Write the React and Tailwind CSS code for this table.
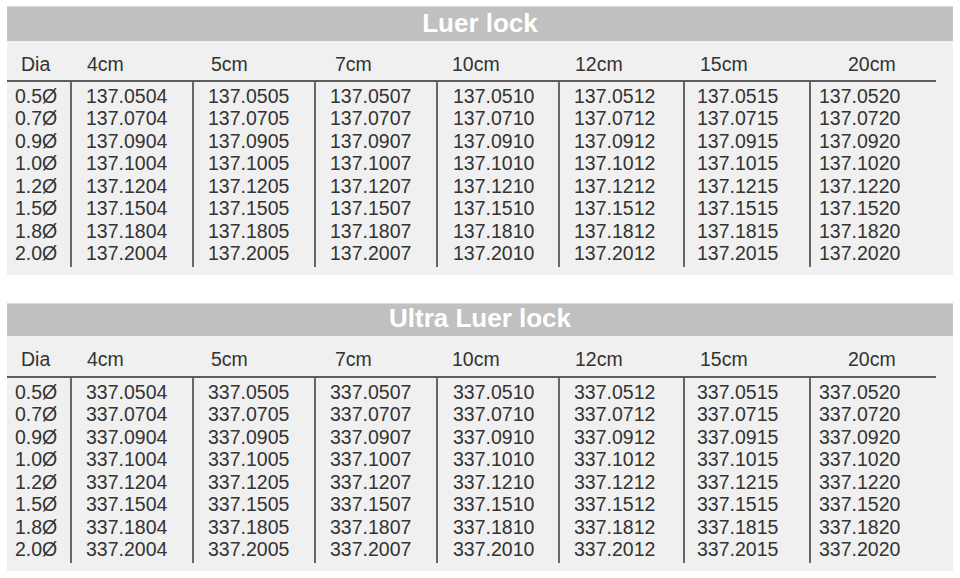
import React from "react";

const sizes = ["4", "5", "7", "10", "12", "15", "20"];
const codes = ["04", "05", "07", "10", "12", "15", "20"];
const dias = ["0.5", "0.7", "0.9", "1.0", "1.2", "1.5", "1.8", "2.0"];

// padding per column, measured off the picture
const headPad = ["pl-[17px]", "pl-[19px]", "pl-[21px]", "pl-[16px]", "pl-[17px]", "pl-[17px]", "pl-[39px]"];
const cellPad = ["pl-[14px]", "pl-[14px]", "pl-[14px]", "pl-[15px]", "pl-[14px]", "pl-[12px]", "pl-[8px]"];

const cols = "grid grid-cols-[63px_122px_122px_122px_122px_125px_126px_127px] w-[929px]";

function Panel({ title, prefix, titleLeading, headHeight }) {
  return (
    <div className="w-[946px] ml-[7px] bg-[#f0f0f0] pb-[8px]">
      <div
        className={`border-t border-[#d9d9d9] bg-[#c0c0c0] text-center text-white font-bold text-[26px] ${titleLeading}`}
      >
        {title}
      </div>

      <div className={`${cols} ${headHeight} pt-[12px] border-b-2 border-[#5e5e5e]`}>
        <div className="pl-[14px]">Dia</div>
        {sizes.map((s, i) => (
          <div key={s} className={headPad[i]}>
            {s}cm
          </div>
        ))}
      </div>

      <div className={cols}>
        <div className="pl-[8px] pt-[2.5px] pb-[2.5px]">
          {dias.map((d) => (
            <div key={d}>{d}Ø</div>
          ))}
        </div>
        {codes.map((c, i) => (
          <div key={c} className={`border-l-2 border-[#666] pt-[2.5px] pb-[2.5px] ${cellPad[i]}`}>
            {dias.map((d) => (
              <div key={d}>
                {prefix}.{d.replace(".", "")}
                {c}
              </div>
            ))}
          </div>
        ))}
      </div>
    </div>
  );
}

export default function App() {
  return (
    <div
      className="w-[960px] h-[578px] bg-white pt-[6px] text-[#333] text-[19.5px] leading-[22.5px]"
      style={{ fontFamily: '"Liberation Sans", Arial, sans-serif' }}
    >
      <Panel title="Luer lock" prefix="137" titleLeading="leading-[32px] pb-[2px]" headHeight="h-[41px]" />
      <div className="h-[28px]" />
      <Panel title="Ultra Luer lock" prefix="337" titleLeading="leading-[29px] pb-[3px]" headHeight="h-[42px]" />
    </div>
  );
}
